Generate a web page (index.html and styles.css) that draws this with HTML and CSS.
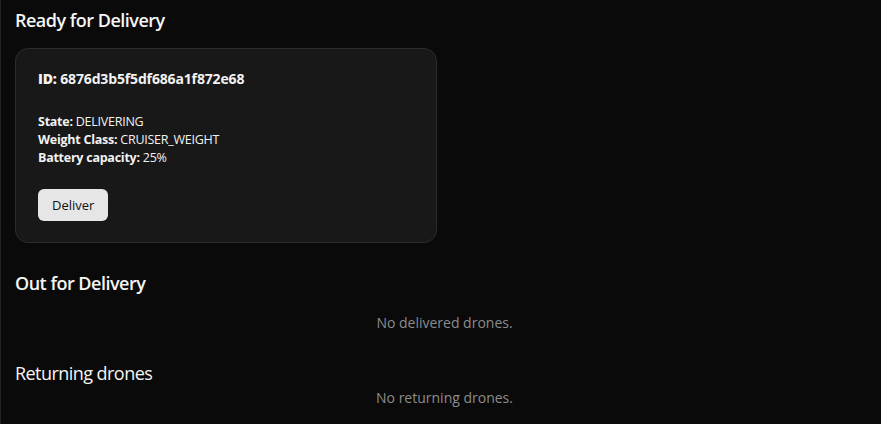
FILE: index.html
```html
<!DOCTYPE html>
<html lang="en">
<head>
<meta charset="utf-8">
<title>Drones</title>
<link rel="stylesheet" href="styles.css">
</head>
<body>
<main class="page">
  <section class="section">
    <h2 class="section-title">Ready for Delivery</h2>
    <div class="card">
      <div class="card-id"><strong>ID:</strong> 6876d3b5f5df686a1f872e68</div>
      <div class="card-info">
        <div><strong>State:</strong> DELIVERING</div>
        <div><strong>Weight Class:</strong> CRUISER_WEIGHT</div>
        <div><strong>Battery capacity:</strong> 25%</div>
      </div>
      <button class="btn" type="button">Deliver</button>
    </div>
  </section>
  <section class="section">
    <h2 class="section-title">Out for Delivery</h2>
    <p class="empty">No delivered drones.</p>
  </section>
  <section class="section section-returning">
    <h2 class="section-title section-title-light">Returning drones</h2>
    <p class="empty empty-tight">No returning drones.</p>
  </section>
</main>
</body>
</html>
```
FILE: styles.css
```css
html, body {
  margin: 0;
  padding: 0;
  background: #0a0a0a;
}
body {
  font-family: "Open Sans", "Noto Sans", sans-serif;
  color: #f2f2f2;
  height: 424px;
  overflow: hidden;
}
.page {
  border-left: 1px solid #222;
  padding: 8px 7px 0 14px;
  min-height: 100%;
  box-sizing: border-box;
}
.section-title {
  margin: 0;
  font-size: 18px;
  line-height: 25px;
  font-weight: 600;
  letter-spacing: -0.5px;
  color: #f5f5f5;
}
.section-title-light {
  font-weight: 400;
  letter-spacing: -0.55px;
}
.card {
  margin-top: 15px;
  width: 422px;
  box-sizing: border-box;
  background: #181818;
  border: 1px solid #2c2c2c;
  border-radius: 13px;
  padding: 20px 22px 21px;
}
.card-id {
  font-size: 14px;
  line-height: 20px;
  font-weight: 700;
  letter-spacing: -0.15px;
}
.card-info {
  margin-top: 24px;
  font-size: 12.5px;
  line-height: 18px;
  letter-spacing: -0.25px;
}
.card-info strong {
  font-weight: 700;
}
.btn {
  margin-top: 22px;
  height: 32px;
  padding: 0 14px;
  border: none;
  border-radius: 6px;
  background: #e6e6e6;
  color: #111;
  font-family: inherit;
  font-size: 13px;
  font-weight: 500;
  display: block;
}
.section + .section {
  margin-top: 28px;
}
.empty {
  margin: 17px 0 0;
  text-align: center;
  font-size: 14px;
  line-height: 20px;
  color: #8c8c8c;
}
.empty-tight {
  margin-top: 2px;
}
```
